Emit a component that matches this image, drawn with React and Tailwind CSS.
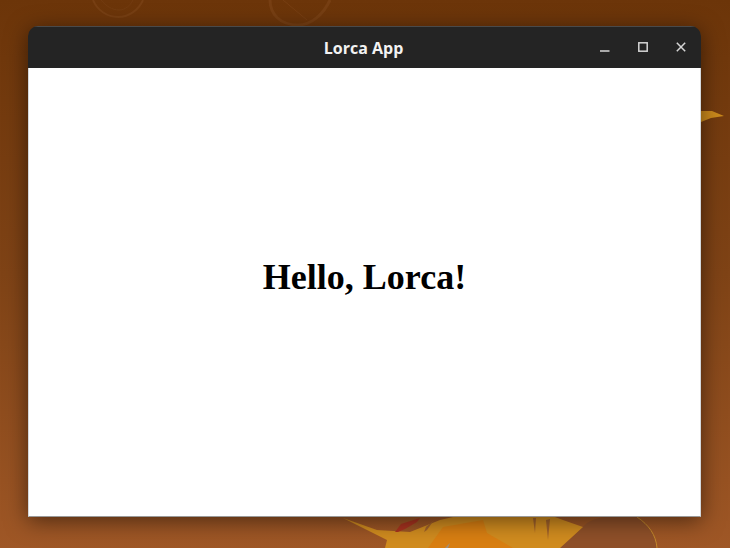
const Wallpaper = () => (
  <svg className="absolute inset-0" width="730" height="548" viewBox="0 0 730 548" fill="none">
    {/* swirls along the top */}
    <path d="M93 0c4 10 14 17 25 17 12 0 21-8 25-17" stroke="#773f13" strokeWidth="2" />
    <path d="M101 0c5 6 11 10 18 10 6 0 11-4 14-10" stroke="#733c11" strokeWidth="1" />
    <path d="M270 0c0 14 10 25 28 25 13 0 25-10 32-25" stroke="#773f13" strokeWidth="3" />
    <path d="M283 0l24 20" stroke="#773f13" strokeWidth="1" />
    {/* arrow tip on the right */}
    <path d="M701 111h11l12 5-13 2-10 4z" fill="#cc8a1c" />
    {/* flower at the bottom */}
    <path d="M587 523c10-6 20-7 32-6h18c12 8 19 18 20 31h-97z" fill="#8f5029" />
    <path d="M637 517c12 8 19 18 20 31" stroke="#c58a2c" strokeWidth="1" />
    <path d="M343 518l44 22-2 8h175l23-21-20-7-8-3H453l-13 3-30 12-33-2z" fill="#d18c1f" />
    <path d="M443 527l40-7 4 13 26 15h-85z" fill="#d97f12" />
    <path d="M395 532l6-8 19-6-3 4-12 7-7 3z" fill="#a9331f" />
    <path d="M533 518h3l-1 15zM546 520l4-1-2 21z" fill="#a2622a" />
    <path d="M450 543l-5 5h3z" fill="#a09080" />
    <path d="M426 527l8-7-7 10-3 2z" fill="#a2622a" />
  </svg>
);

// window control glyphs, all in a 10px box
const Glyph = ({ children }) => (
  <svg width="10" height="10" viewBox="0 0 10 10" fill="none" stroke="#d6d6d6" strokeWidth="1.5">
    {children}
  </svg>
);

export default function App() {
  return (
    <div className="relative h-[548px] w-[730px] overflow-hidden bg-gradient-to-b from-[#6c3509] via-[#7f4316] to-[#9f5726] pl-[28px] pt-[26px]">
      <Wallpaper />
      <div className="relative flex h-[491px] w-[673px] flex-col overflow-hidden rounded-t-[10px] shadow-[0_4px_22px_rgba(0,0,0,0.5)]">
        <header className="flex h-[42px] shrink-0 items-center justify-between border-t border-[#4a4a4a] bg-[#242424] border-b-[#3a3a3a]">
          <div className="w-[121px]" />
          <span className="font-['Open_Sans',sans-serif] text-[16px] font-bold text-[#f2f2f2]">Lorca App</span>
          <div className="mb-[2px] flex w-[123px] items-center justify-end gap-[28px] pr-[15px]">
            <Glyph><path d="M0 9h9.5" /></Glyph>
            <Glyph><rect x="0.8" y="0.8" width="8.4" height="8.4" /></Glyph>
            <Glyph><path d="M0.8 0.8l8.4 8.4M9.2 0.8l-8.4 8.4" /></Glyph>
          </div>
        </header>
        <main className="flex flex-1 items-center justify-center border-x border-b border-[#9a9a9a] border-x-[#d4d8dc] bg-white pb-[30px]">
          <h1 className="font-['Liberation_Serif',serif] text-[36px] font-bold text-black">Hello, Lorca!</h1>
        </main>
      </div>
    </div>
  );
}
